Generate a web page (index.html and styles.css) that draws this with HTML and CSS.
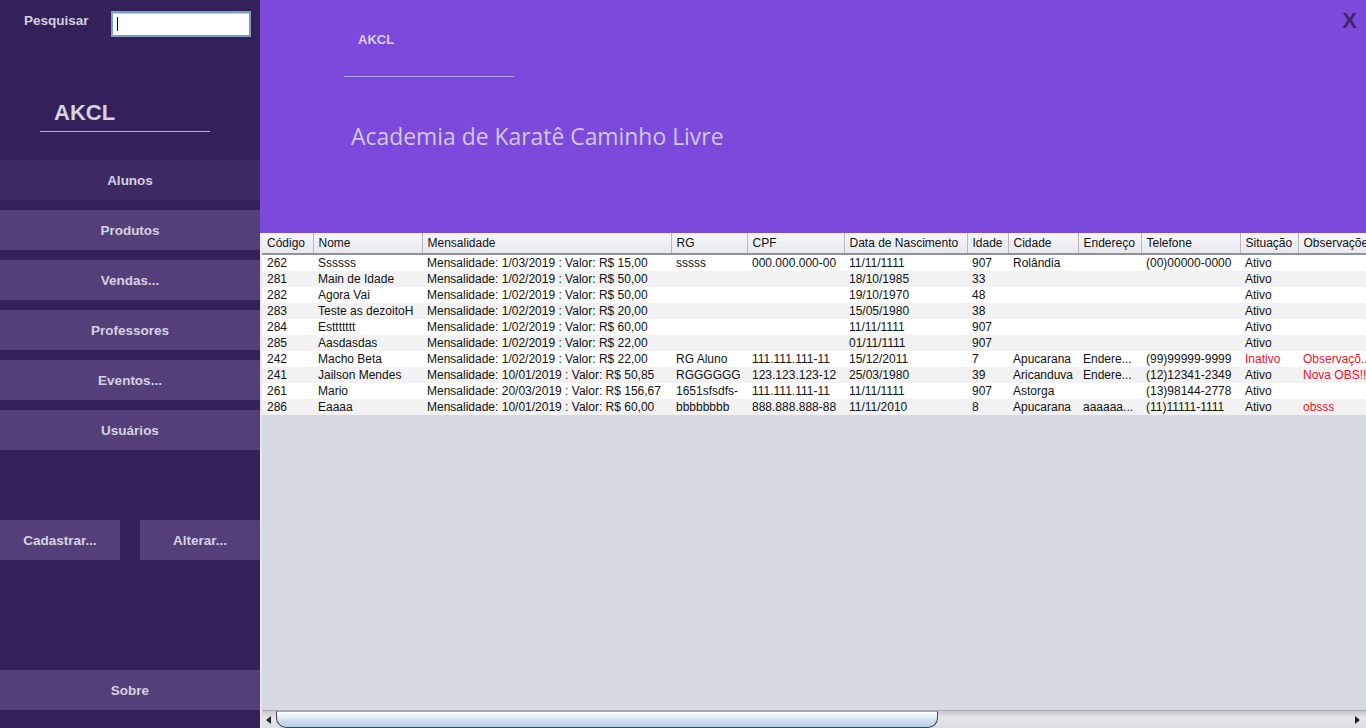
FILE: index.html
```html
<!DOCTYPE html>
<html lang="pt">
<head>
<meta charset="utf-8">
<title>AKCL</title>
<link rel="stylesheet" href="styles.css">
</head>
<body>
<div class="app">
  <aside class="sidebar">
    <div class="search">
      <span class="search-label">Pesquisar</span>
      <div class="search-input"><span class="caret"></span></div>
    </div>
    <div class="brand">AKCL</div>
    <div class="brand-line"></div>
    <nav class="menu">
      <div class="btn btn-active">Alunos</div>
      <div class="btn">Produtos</div>
      <div class="btn">Vendas...</div>
      <div class="btn">Professores</div>
      <div class="btn">Eventos...</div>
      <div class="btn">Usuários</div>
    </nav>
    <div class="actions">
      <div class="btn btn-half">Cadastrar...</div>
      <div class="btn btn-half">Alterar...</div>
    </div>
    <div class="spacer"></div>
    <div class="btn btn-about">Sobre</div>
  </aside>
  <main class="main">
    <header class="header">
      <div class="header-top">
        <div class="header-brand">AKCL</div>
        <div class="close">X</div>
      </div>
      <div class="header-line"></div>
      <h1 class="title">Academia de Karatê Caminho Livre</h1>
    </header>
    <section class="panel">
      <div class="table-wrap">
        <table class="grid">
          <colgroup>
            <col class="c1"><col class="c2"><col class="c3"><col class="c4"><col class="c5"><col class="c6"><col class="c7"><col class="c8"><col class="c9"><col class="c10"><col class="c11"><col class="c12">
          </colgroup>
          <thead>
            <tr><th>Código</th><th>Nome</th><th>Mensalidade</th><th>RG</th><th>CPF</th><th>Data de Nascimento</th><th>Idade</th><th>Cidade</th><th>Endereço</th><th>Telefone</th><th>Situação</th><th>Observações</th></tr>
          </thead>
          <tbody>
            <tr><td>262</td><td>Ssssss</td><td>Mensalidade: 1/03/2019 : Valor: R$ 15,00</td><td>sssss</td><td>000.000.000-00</td><td>11/11/1111</td><td>907</td><td>Rolândia</td><td></td><td>(00)00000-0000</td><td>Ativo</td><td></td></tr>
            <tr><td>281</td><td>Main de Idade</td><td>Mensalidade: 1/02/2019 : Valor: R$ 50,00</td><td></td><td></td><td>18/10/1985</td><td>33</td><td></td><td></td><td></td><td>Ativo</td><td></td></tr>
            <tr><td>282</td><td>Agora Vai</td><td>Mensalidade: 1/02/2019 : Valor: R$ 50,00</td><td></td><td></td><td>19/10/1970</td><td>48</td><td></td><td></td><td></td><td>Ativo</td><td></td></tr>
            <tr><td>283</td><td>Teste as dezoitoH</td><td>Mensalidade: 1/02/2019 : Valor: R$ 20,00</td><td></td><td></td><td>15/05/1980</td><td>38</td><td></td><td></td><td></td><td>Ativo</td><td></td></tr>
            <tr><td>284</td><td>Esttttttt</td><td>Mensalidade: 1/02/2019 : Valor: R$ 60,00</td><td></td><td></td><td>11/11/1111</td><td>907</td><td></td><td></td><td></td><td>Ativo</td><td></td></tr>
            <tr><td>285</td><td>Aasdasdas</td><td>Mensalidade: 1/02/2019 : Valor: R$ 22,00</td><td></td><td></td><td>01/11/1111</td><td>907</td><td></td><td></td><td></td><td>Ativo</td><td></td></tr>
            <tr><td>242</td><td>Macho Beta</td><td>Mensalidade: 1/02/2019 : Valor: R$ 22,00</td><td>RG Aluno</td><td>111.111.111-11</td><td>15/12/2011</td><td>7</td><td>Apucarana</td><td>Endere...</td><td>(99)99999-9999</td><td class="red">Inativo</td><td class="red">Observaçõ...</td></tr>
            <tr><td>241</td><td>Jailson Mendes</td><td>Mensalidade: 10/01/2019 : Valor: R$ 50,85</td><td>RGGGGGG</td><td>123.123.123-12</td><td>25/03/1980</td><td>39</td><td>Aricanduva</td><td>Endere...</td><td>(12)12341-2349</td><td>Ativo</td><td class="red">Nova OBS!!!</td></tr>
            <tr><td>261</td><td>Mario</td><td>Mensalidade: 20/03/2019 : Valor: R$ 156,67</td><td>1651sfsdfs-</td><td>111.111.111-11</td><td>11/11/1111</td><td>907</td><td>Astorga</td><td></td><td>(13)98144-2778</td><td>Ativo</td><td></td></tr>
            <tr><td>286</td><td>Eaaaa</td><td>Mensalidade: 10/01/2019 : Valor: R$ 60,00</td><td>bbbbbbbb</td><td>888.888.888-88</td><td>11/11/2010</td><td>8</td><td>Apucarana</td><td>aaaaaa...</td><td>(11)11111-1111</td><td>Ativo</td><td class="red">obsss</td></tr>
          </tbody>
        </table>
      </div>
      <div class="hscroll">
        <div class="arrow arrow-left"></div>
        <div class="track">
          <div class="thumb"></div>
        </div>
        <div class="arrow arrow-right"></div>
      </div>
    </section>
  </main>
</div>
</body>
</html>
```
FILE: styles.css
```css
html, body {
  margin: 0;
  padding: 0;
  width: 1366px;
  height: 728px;
  overflow: hidden;
}

.app {
  display: flex;
  width: 1366px;
  height: 728px;
}

/* ---------- Sidebar ---------- */
.sidebar {
  width: 260px;
  flex: 0 0 260px;
  background: #35215a;
  display: flex;
  flex-direction: column;
  font-family: "Liberation Sans", Arial, sans-serif;
  font-weight: bold;
  color: #d2d0e0;
}

.search {
  display: flex;
  align-items: flex-start;
  padding: 11px 9px 0 24px;
  height: 27px;
}

.search-label {
  font-size: 13.5px;
  width: 88px;
  margin-top: 2px;
}

.search-input {
  width: 133px;
  height: 22px;
  background: #fff;
  border: 2px solid #7f9fc2;
  box-shadow: inset 0 1px 0 #c8c8c8;
  display: flex;
  align-items: center;
  padding-left: 4px;
}

.caret {
  width: 1px;
  height: 14px;
  background: #000;
}

.brand {
  font-size: 22px;
  margin: 59px 0 0 54px;
  height: 31px;
  line-height: 31px;
  color: #d4d2de;
}

.brand-line {
  margin: 3px 0 0 40px;
  width: 170px;
  height: 1px;
  background: #b3aac8;
}

.menu {
  margin-top: 28px;
  display: flex;
  flex-direction: column;
  gap: 10px;
}

.btn {
  height: 40px;
  background: #553f78;
  display: flex;
  align-items: center;
  justify-content: center;
  font-size: 13.5px;
  color: #d4d2e2;
}

.btn-active {
  background: #3f2b63;
}

.actions {
  margin-top: 70px;
  display: flex;
  justify-content: space-between;
}

.btn-half {
  width: 120px;
}

.spacer {
  flex: 1;
}

.btn-about {
  margin-bottom: 18px;
}

/* ---------- Main ---------- */
.main {
  flex: 1;
  display: flex;
  flex-direction: column;
  min-width: 0;
}

.header {
  height: 233px;
  flex: 0 0 233px;
  background: #7b4adc;
  position: relative;
  font-family: "Liberation Sans", Arial, sans-serif;
}

.header-top {
  display: flex;
  justify-content: space-between;
  padding: 32px 9px 0 98px;
}

.header-brand {
  font-weight: bold;
  font-size: 13px;
  color: #d4d0e4;
}

.close {
  position: absolute;
  top: 8px;
  right: 9px;
  font-size: 22px;
  font-weight: bold;
  color: #3b2866;
}

.header-line {
  margin: 29px 0 0 84px;
  width: 170px;
  height: 1px;
  background: #b8a6e6;
}

.title {
  margin: 47px 0 0 91px;
  font-family: "Open Sans", "Noto Sans", sans-serif;
  font-weight: normal;
  font-size: 22.9px;
  color: #cfc8e2;
  line-height: 26px;
}

/* ---------- Table panel ---------- */
.panel {
  flex: 1;
  display: flex;
  flex-direction: column;
  background: #d6d9e1;
  border-left: 2px solid #e9e9ef;
  min-height: 0;
  overflow: hidden;
}

.table-wrap {
  flex: 1;
  overflow: hidden;
}

.grid {
  border-collapse: collapse;
  table-layout: fixed;
  width: 1120px;
  font-family: "Liberation Sans", Arial, sans-serif;
  font-size: 12px;
  color: #111;
}

.c1 { width: 51px; }
.c2 { width: 109px; }
.c3 { width: 249px; }
.c4 { width: 76px; }
.c5 { width: 97px; }
.c6 { width: 123px; }
.c7 { width: 41px; }
.c8 { width: 70px; }
.c9 { width: 63px; }
.c10 { width: 99px; }
.c11 { width: 58px; }
.c12 { width: 84px; }

.grid th {
  height: 20px;
  padding: 0 0 0 5px;
  text-align: left;
  font-weight: normal;
  background: linear-gradient(#f7f7f9, #e8e9ee);
  border-right: 1px solid #b6b8c0;
  border-bottom: 2px solid #8e929c;
  white-space: nowrap;
  overflow: hidden;
}

.grid td {
  height: 16px;
  padding: 0 0 0 5px;
  white-space: nowrap;
  overflow: hidden;
  line-height: 16px;
}

.grid tbody tr:nth-child(odd) { background: #ffffff; }
.grid tbody tr:nth-child(even) { background: #f2f2f2; }

.grid td.red { color: #f2102c; }

/* ---------- Horizontal scrollbar ---------- */
.hscroll {
  height: 17px;
  flex: 0 0 17px;
  display: flex;
  background: linear-gradient(#c4c6cc, #e4e5ea 40%, #dcdde2);
  border-top: 1px solid #a9abb2;
}

.arrow {
  width: 14px;
  position: relative;
}

.arrow-right {
  width: 22px;
}

.arrow-left::after {
  content: "";
  position: absolute;
  left: 4px;
  top: 5px;
  border-right: 5px solid #222;
  border-top: 4px solid transparent;
  border-bottom: 4px solid transparent;
}

.arrow-right::after {
  content: "";
  position: absolute;
  right: 6px;
  top: 5px;
  border-left: 5px solid #222;
  border-top: 4px solid transparent;
  border-bottom: 4px solid transparent;
}

.track {
  flex: 1;
  display: flex;
}

.thumb {
  width: 660px;
  height: 15px;
  border: 1px solid #3e4658;
  border-top-color: #9aa8bc;
  border-radius: 0 0 10px 10px;
  background: linear-gradient(#ffffff, #d4e2f2 50%, #b6cbe2);
}
```
